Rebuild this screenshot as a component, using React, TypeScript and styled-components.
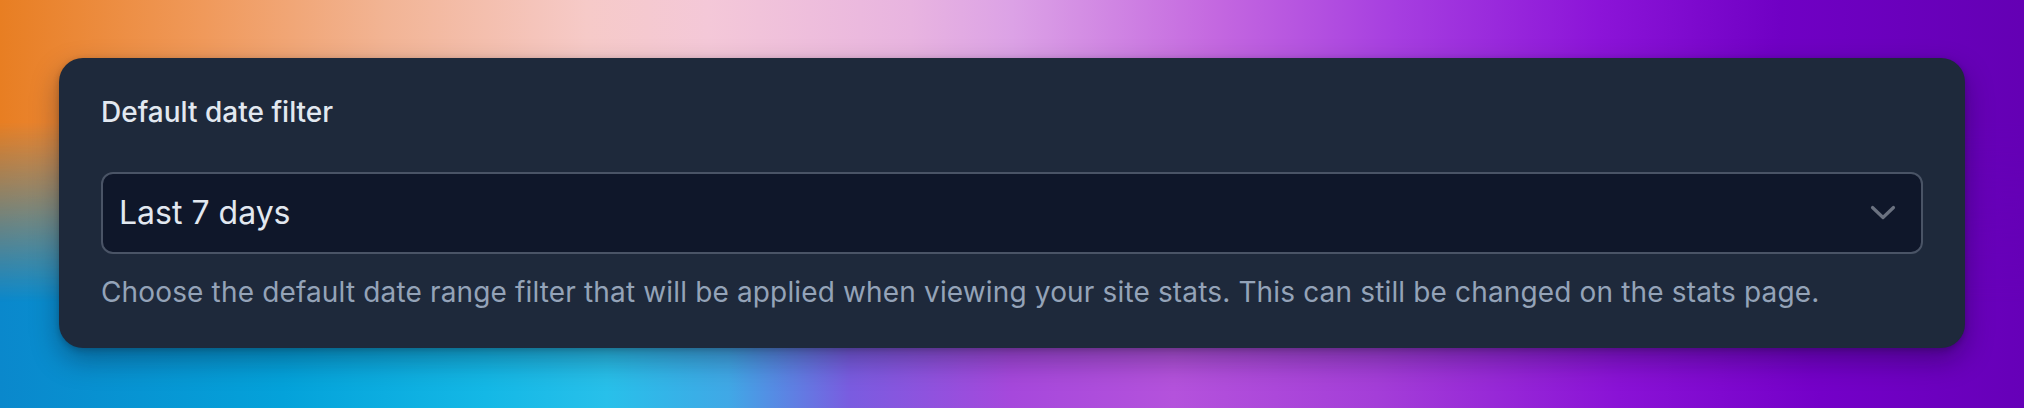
import React, { FC } from "react";
import styled, { createGlobalStyle } from "styled-components";

const GlobalStyle = createGlobalStyle`
  html, body {
    margin: 0;
    padding: 0;
  }
  body {
    font-family: Inter, "Noto Sans", "Liberation Sans", sans-serif;
    -webkit-font-smoothing: antialiased;
  }
  * {
    box-sizing: border-box;
  }
`;

const Page = styled.div`
  position: relative;
  width: 2024px;
  height: 408px;
  padding: 58px 59px 0;
  overflow: hidden;
  background: linear-gradient(
    to right,
    #0a88cc 0%,
    #04a2da 14%,
    #14b8e6 24%,
    #28c0ea 30%,
    #40a8e6 36%,
    #7a5ce0 42%,
    #a648dc 50%,
    #b452dc 58%,
    #a43ed8 68%,
    #8a12d6 80%,
    #7400c8 90%,
    #6600b8 100%
  );
  /* top colours fade into the bottom ones */
  &::before {
    content: "";
    position: absolute;
    inset: 0;
    background: linear-gradient(
      to right,
      #e87e22 0%,
      #f0995a 10%,
      #f2b494 19%,
      #f6cac8 29%,
      #f4c8d8 35%,
      #e8b4e0 45%,
      #dca2e6 50%,
      #c468e0 60%,
      #a63ee0 69%,
      #8c14d8 79%,
      #7000c4 88%,
      #6400b4 100%
    );
    -webkit-mask-image: linear-gradient(to bottom, #000 0%, #000 30%, transparent 74%);
    mask-image: linear-gradient(to bottom, #000 0%, #000 30%, transparent 74%);
  }
`;

const Card = styled.section`
  position: relative;
  height: 290px;
  padding: 34px 42px 36px 42px;
  background: #1e293b;
  border-radius: 24px;
  box-shadow: 0 12px 28px rgba(10, 10, 30, 0.35), 0 2px 6px rgba(0, 0, 0, 0.2);
  display: flex;
  flex-direction: column;
`;

const Label = styled.label`
  font-size: 28px;
  line-height: 40px;
  font-weight: 500;
  color: #e2e8f0;
`;

const Trigger = styled.button`
  margin-top: 40px;
  height: 82px;
  width: 100%;
  display: flex;
  align-items: center;
  justify-content: space-between;
  padding: 0 25px 0 16px;
  background: #0f172a;
  border: 2px solid #4a5466;
  border-radius: 12px;
  font-family: inherit;
  cursor: pointer;
`;

const Value = styled.span`
  font-size: 32px;
  line-height: 44px;
  font-weight: 400;
  color: #e2e8f0;
`;

const Help = styled.p`
  margin: 18px 0 0;
  font-size: 28px;
  line-height: 40px;
  letter-spacing: 0.15px;
  color: #94a3b8;
`;

const Chevron: FC = () => (
  <svg width="26" height="16" viewBox="0 0 26 16" fill="none">
    <path
      d="M2.5 2.5 L13 12.5 L23.5 2.5"
      stroke="#6b7280"
      strokeWidth="3.2"
      strokeLinecap="round"
      strokeLinejoin="round"
    />
  </svg>
);

const App: FC = () => {
  return (
    <>
      <GlobalStyle />
      <Page>
        <Card>
          <Label>Default date filter</Label>
          <Trigger type="button">
            <Value>Last 7 days</Value>
            <Chevron />
          </Trigger>
          <Help>
            Choose the default date range filter that will be applied when
            viewing your site stats. This can still be changed on the stats
            page.
          </Help>
        </Card>
      </Page>
    </>
  );
};

export default App;
